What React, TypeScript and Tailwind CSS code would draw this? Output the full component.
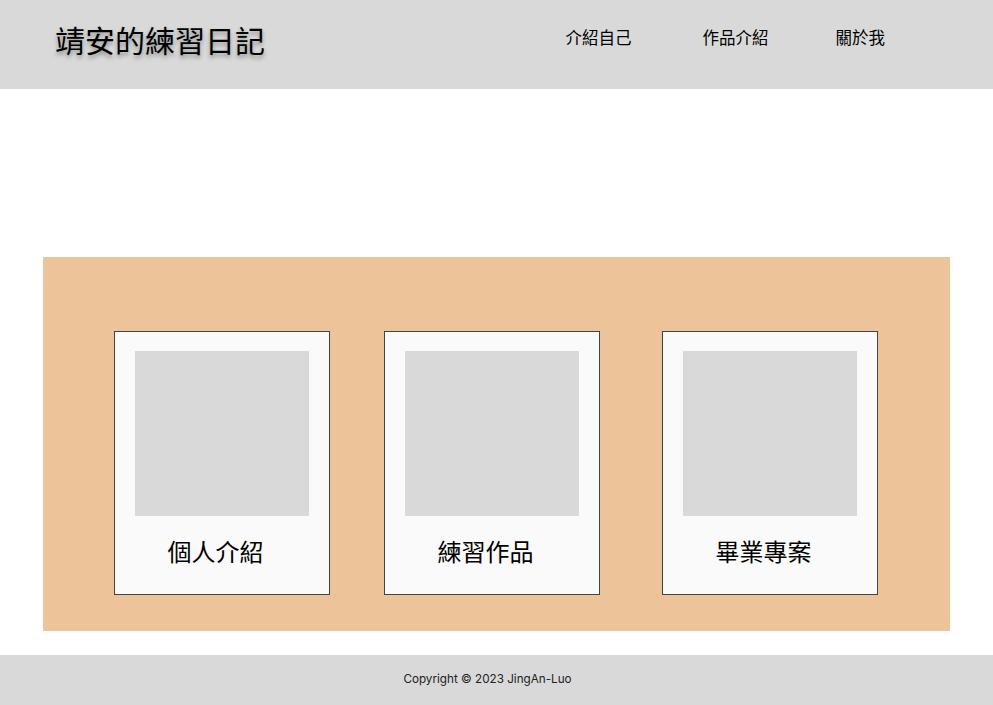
const cards = [
  { label: '個人介紹', ml: 'ml-[71px]' },
  { label: '練習作品', ml: 'ml-[54px]' },
  { label: '畢業專案', ml: 'ml-[62px]' },
];

export default function App() {
  return (
    <div className="w-[993px] h-[705px] flex flex-col bg-white" style={{ fontFamily: '"Noto Sans CJK TC", "Noto Sans", sans-serif' }}>
      <header className="h-[89px] shrink-0 bg-[#d9d9d9] flex items-center">
        <h1 className="ml-[55px] mb-[11px] text-[30px] leading-none text-black [text-shadow:0_3px_4px_rgba(0,0,0,0.35)]">
          靖安的練習日記
        </h1>
        <nav className="ml-auto mr-[108px] mb-[14px] flex items-center text-[16.5px] text-black">
          <a className="w-[137px]">介紹自己</a>
          <a className="w-[133px]">作品介紹</a>
          <a>關於我</a>
        </nav>
      </header>

      <main className="flex-1 pt-[168px]">
        <section className="ml-[43px] w-[907px] h-[374px] bg-[#edc399] flex items-start pt-[74px]">
          {cards.map((c) => (
            <div key={c.label} className={`${c.ml} w-[216px] h-[264px] bg-[#fafafa] border border-[#444] flex flex-col items-center`}>
              <div className="mt-[19px] w-[174px] h-[165px] bg-[#d9d9d9]" />
              <div className="mt-[23px] mr-[13px] text-[24px] leading-none text-black">{c.label}</div>
            </div>
          ))}
        </section>
      </main>

      <footer className="h-[50px] shrink-0 bg-[#d9d9d9] flex items-center justify-center pr-[18px] text-[11.7px] text-[#222]" style={{ fontFamily: 'Inter, "Noto Sans", sans-serif' }}>
        Copyright © 2023 JingAn-Luo
      </footer>
    </div>
  );
}
